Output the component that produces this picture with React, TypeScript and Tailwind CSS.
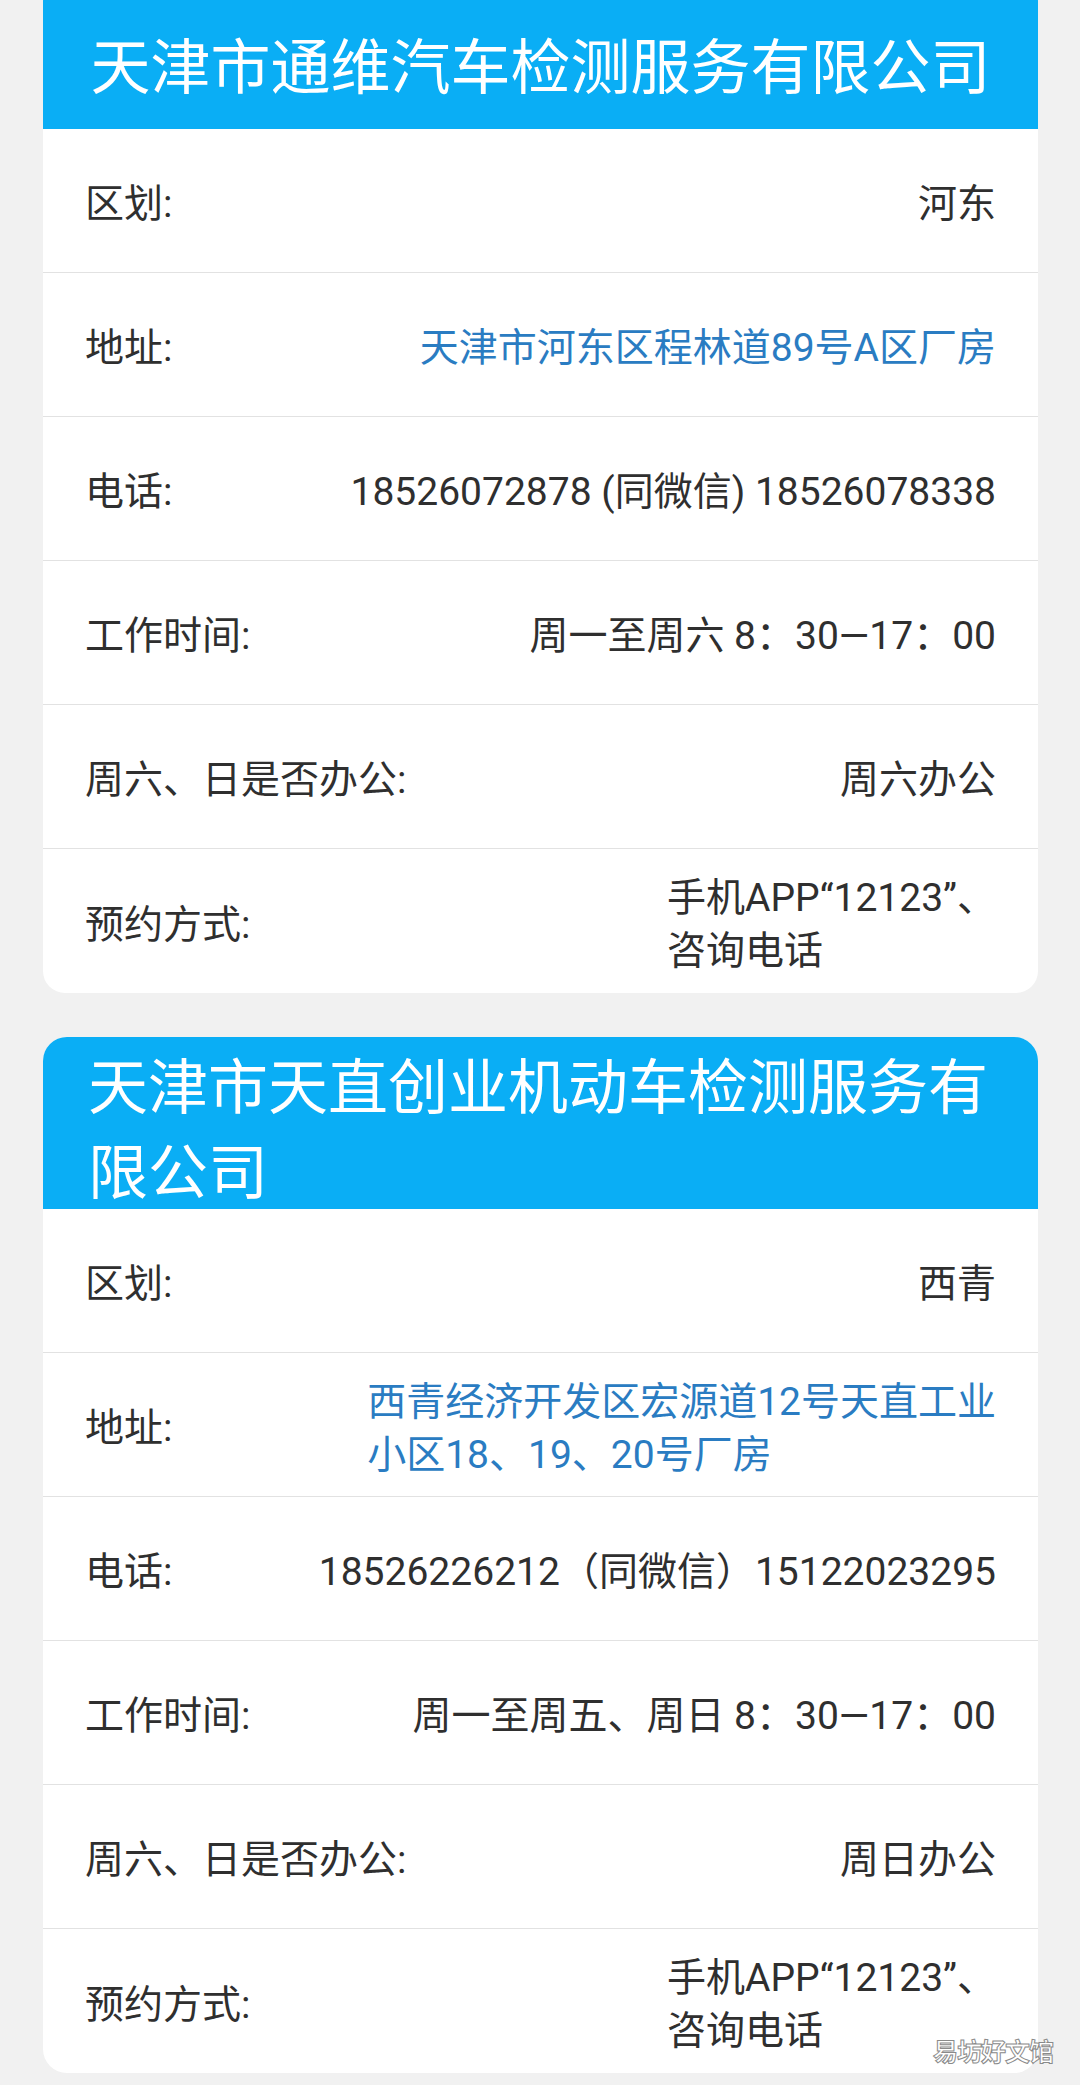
import React from 'react';

interface Row {
  label: string;
  value: string[];
  link?: boolean;
}

interface Station {
  title: string;
  rows: Row[];
}

const stations: Station[] = [
  {
    title: '天津市通维汽车检测服务有限公司',
    rows: [
      { label: '区划:', value: ['河东'] },
      { label: '地址:', value: ['天津市河东区程林道89号A区厂房'], link: true },
      { label: '电话:', value: ['18526072878 (同微信) 18526078338'] },
      { label: '工作时间:', value: ['周一至周六 8：30—17：00'] },
      { label: '周六、日是否办公:', value: ['周六办公'] },
      { label: '预约方式:', value: ['手机APP“12123”、', '咨询电话'] },
    ],
  },
  {
    title: '天津市天直创业机动车检测服务有限公司',
    rows: [
      { label: '区划:', value: ['西青'] },
      { label: '地址:', value: ['西青经济开发区宏源道12号天直工业', '小区18、19、20号厂房'], link: true },
      { label: '电话:', value: ['18526226212（同微信）15122023295'] },
      { label: '工作时间:', value: ['周一至周五、周日 8：30—17：00'] },
      { label: '周六、日是否办公:', value: ['周日办公'] },
      { label: '预约方式:', value: ['手机APP“12123”、', '咨询电话'] },
    ],
  },
];

function InfoRow({ row }: { row: Row }) {
  const color = row.link ? 'text-[#2a7cc2]' : 'text-[#2f2f2f]';
  return (
    <div className="flex h-[144px] items-center justify-between border-b border-[#e2e2e2] px-[42px] pt-[8px] last:border-b-0">
      <span className="whitespace-nowrap text-[39px] text-[#2f2f2f]">{row.label}</span>
      {row.value.length > 1 ? (
        <div className={`text-left text-[39px] leading-[53px] ${color}`}>
          {row.value.map((line) => (
            <div key={line} className="whitespace-nowrap">
              {line}
            </div>
          ))}
        </div>
      ) : (
        <span className={`whitespace-nowrap text-[39px] ${color}`}>{row.value[0]}</span>
      )}
    </div>
  );
}

export default function App() {
  const [first, second] = stations;

  return (
    <div
      className="relative min-h-[2085px] overflow-hidden bg-[#f1f1f1] pl-[43px] pr-[42px]"
      style={{ fontFamily: 'Roboto, "Noto Sans CJK SC", sans-serif' }}
    >
      {/* first card, scrolled partly off the top */}
      <div className="mt-[-20px] overflow-hidden rounded-[22px] bg-white">
        <div className="flex h-[149px] items-center justify-center bg-[#0aaef5] pt-[28px]">
          <h2 className="whitespace-nowrap text-[60px] font-normal text-white">{first.title}</h2>
        </div>
        {first.rows.map((row) => (
          <InfoRow key={row.label} row={row} />
        ))}
      </div>

      <div className="mt-[44px] overflow-hidden rounded-[24px] bg-white">
        <div className="h-[172px] bg-[#0aaef5] px-[45px] pt-[9px]">
          <h2 className="text-[60px] font-normal leading-[85px] text-white">{second.title}</h2>
        </div>
        {second.rows.map((row) => (
          <InfoRow key={row.label} row={row} />
        ))}
      </div>

      {/* watermark */}
      <div className="absolute left-[933px] top-[2034px] text-[25px] font-bold tracking-[-1px] text-white [-webkit-text-stroke:1px_#8a8a8a]">
        易坊好文馆
      </div>
    </div>
  );
}
